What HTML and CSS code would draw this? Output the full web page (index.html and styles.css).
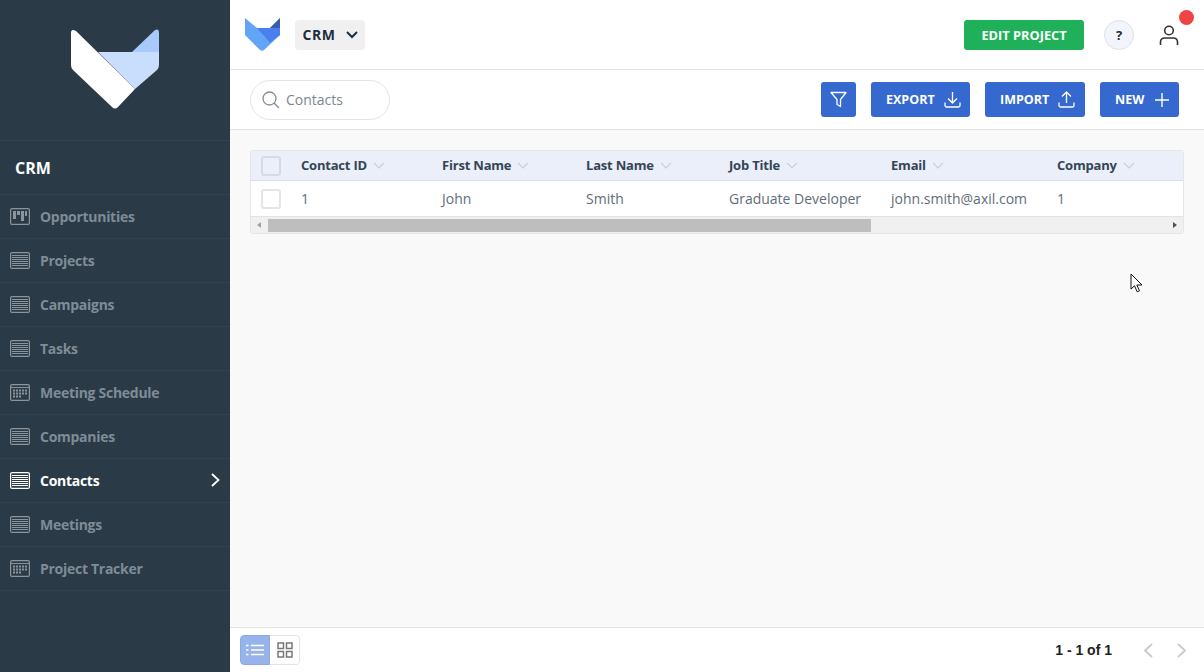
FILE: index.html
```html
<!DOCTYPE html>
<html lang="en">
<head>
<meta charset="utf-8">
<title>CRM Contacts</title>
<link rel="stylesheet" href="styles.css">
</head>
<body>
<svg class="defs" width="0" height="0" aria-hidden="true">
  <defs>
    <symbol id="i-table" viewBox="0 0 20 17">
      <rect x="0.6" y="0.6" width="18.8" height="15.8" rx="1.5" fill="none" stroke="currentColor" stroke-width="1.2"/>
      <path d="M2 3.500h16M2 5.500h16M2 7.500h16M2 9.500h16M2 11.500h16M2 13.500h16" stroke="currentColor" stroke-width="1" fill="none"/>
    </symbol>
    <symbol id="i-kanban" viewBox="0 0 20 17">
      <rect x="0.6" y="0.600" width="18.8" height="15.8" rx="1.5" fill="none" stroke="currentColor" stroke-width="1.2"/>
      <path d="M3 3h3v8H3zM7 3h3v4H7zM11 3h3v10h-3zM15 3h2v5h-2z" fill="currentColor"/>
    </symbol>
    <symbol id="i-cal" viewBox="0 0 20 17">
      <rect x="0.6" y="0.6" width="18.8" height="15.8" rx="1.5" fill="none" stroke="currentColor" stroke-width="1.2"/>
      <path d="M1 3.500h18" stroke="currentColor" stroke-width="1"/>
      <path d="M3 6.500h14M3 9.500h14M3 12.500h9" stroke="currentColor" stroke-width="2" stroke-dasharray="2 1" fill="none"/>
    </symbol>
    <symbol id="i-sort" viewBox="0 0 12 7">
      <path d="M1 1l5 5 5-5" fill="none" stroke="currentColor" stroke-width="1.200"/>
    </symbol>
  </defs>
</svg>
<div class="app">
  <aside class="sidebar">
    <div class="side-logo">
      <svg width="88" height="81" viewBox="0 0 88 81">
        <path d="M61 23L84 1Q88 -1 88 4V23Z" fill="#a8c9fb"/>
        <path d="M27 23H88V36Q88 39 86 41L64 60Z" fill="#c9ddfd"/>
        <path d="M0 4Q0 -1 5 2L64 60 47 78Q44 81 41 78L2 41Q0 39 0 36Z" fill="#fff"/>
      </svg>
    </div>
    <div class="side-title">CRM</div>
    <nav class="side-nav">
      <a class="nav-item"><svg class="nav-icon"><use href="#i-kanban"/></svg><span>Opportunities</span></a>
      <a class="nav-item"><svg class="nav-icon"><use href="#i-table"/></svg><span>Projects</span></a>
      <a class="nav-item"><svg class="nav-icon"><use href="#i-table"/></svg><span>Campaigns</span></a>
      <a class="nav-item"><svg class="nav-icon"><use href="#i-table"/></svg><span>Tasks</span></a>
      <a class="nav-item"><svg class="nav-icon"><use href="#i-cal"/></svg><span>Meeting Schedule</span></a>
      <a class="nav-item"><svg class="nav-icon"><use href="#i-table"/></svg><span>Companies</span></a>
      <a class="nav-item active"><svg class="nav-icon"><use href="#i-table"/></svg><span>Contacts</span>
        <svg class="nav-chevron" width="9" height="14" viewBox="0 0 9 14"><path d="M1 1l6.500 6L1 13" fill="none" stroke="#fff" stroke-width="1.800"/></svg></a>
      <a class="nav-item"><svg class="nav-icon"><use href="#i-table"/></svg><span>Meetings</span></a>
      <a class="nav-item"><svg class="nav-icon"><use href="#i-cal"/></svg><span>Project Tracker</span></a>
    </nav>
  </aside>
  <main class="main">
    <header class="topbar">
      <svg class="top-logo" width="35" height="33" viewBox="0 0 35 33">
        <path d="M0 0L12 10H25L35 0V17L19 32Q17 33.500 15 32L0 17Z" fill="#62a4f5"/>
        <path d="M12 10H35V17L25 24.500Z" fill="#4a7fee"/>
        <path d="M25 10L35 0V10Z" fill="#3a5bb0"/>
      </svg>
      <button class="project-select">CRM
        <svg width="12" height="8" viewBox="0 0 12 8"><path d="M1 1l5 5 5-5" fill="none" stroke="#1f2d3d" stroke-width="2"/></svg>
      </button>
      <div class="top-right">
        <button class="btn-edit">EDIT PROJECT</button>
        <button class="btn-help">?</button>
        <div class="user">
          <svg width="20" height="22" viewBox="0 0 20 22"><circle cx="10" cy="6.500" r="4.300" fill="none" stroke="#333" stroke-width="1.600"/><path d="M1.500 21v-3Q1.500 14 6 14h8q4.500 0 4.500 4v3" fill="none" stroke="#333" stroke-width="1.600"/></svg>
          <span class="user-badge"></span>
        </div>
      </div>
    </header>
    <section class="toolbar">
      <label class="search">
        <svg width="18" height="18" viewBox="0 0 18 18"><circle cx="7.500" cy="7.500" r="6.500" fill="none" stroke="#8a8a8a" stroke-width="1.300"/><path d="M12.300 12.300L17 17" stroke="#8a8a8a" stroke-width="1.300"/></svg>
        <span>Contacts</span>
      </label>
      <div class="actions">
        <button class="btn btn-icon"><svg width="17" height="17" viewBox="0 0 17 17"><path d="M1 1.500h15L10.500 8.500V15.500L7 13.500V8.500Z" fill="none" stroke="#fff" stroke-width="1.300" stroke-linejoin="round"/></svg></button>
        <button class="btn btn-label btn-export">EXPORT<svg width="17" height="17" viewBox="0 0 17 17"><path d="M8.500 1v10.500M4 7.500l4.500 4.500L13 7.500M1 11.500v3Q1 16 2.500 16h12Q16 16 16 14.500v-3" fill="none" stroke="#fff" stroke-width="1.300"/></svg></button>
        <button class="btn btn-label btn-import">IMPORT<svg width="17" height="17" viewBox="0 0 17 17"><path d="M8.500 12V1.500M4 5.500L8.500 1 13 5.500M1 11.500v3Q1 16 2.500 16h12Q16 16 16 14.500v-3" fill="none" stroke="#fff" stroke-width="1.300"/></svg></button>
        <button class="btn btn-label btn-new">NEW<svg width="14" height="14" viewBox="0 0 14 14"><path d="M7 0v14M0 7h14" stroke="#fff" stroke-width="1.400"/></svg></button>
      </div>
    </section>
    <section class="content">
      <div class="grid-card">
        <div class="grid-row grid-head">
          <div class="cell-check"><span class="check check-head"></span></div>
          <div>Contact ID<svg class="sort"><use href="#i-sort"/></svg></div>
          <div>First Name<svg class="sort"><use href="#i-sort"/></svg></div>
          <div>Last Name<svg class="sort"><use href="#i-sort"/></svg></div>
          <div>Job Title<svg class="sort"><use href="#i-sort"/></svg></div>
          <div>Email<svg class="sort"><use href="#i-sort"/></svg></div>
          <div>Company<svg class="sort"><use href="#i-sort"/></svg></div>
        </div>
        <div class="grid-row grid-body">
          <div class="cell-check"><span class="check"></span></div>
          <div>1</div>
          <div>John</div>
          <div>Smith</div>
          <div>Graduate Developer</div>
          <div>john.smith@axil.com</div>
          <div>1</div>
        </div>
        <div class="scrollbar">
          <span class="arrow arrow-left"></span>
          <span class="thumb"></span>
          <span class="arrow arrow-right"></span>
        </div>
      </div>
    </section>
    <footer class="footer">
      <div class="view-toggle">
        <button class="view view-on"><svg width="18" height="12" viewBox="0 0 18 12"><path d="M5 1.500h13M5 6h13M5 10.500h13M0 1.500h2.500M0 6h2.500M0 10.500h2.500" stroke="#fff" stroke-width="1.400"/></svg></button>
        <button class="view"><svg width="16" height="16" viewBox="0 0 16 16"><path d="M1 1h5.500v5.500H1zM9.500 1H15v5.500H9.500zM1 9.500h5.500V15H1zM9.500 9.500H15V15H9.500z" fill="none" stroke="#777" stroke-width="1.500"/></svg></button>
      </div>
      <div class="pager">
        <span>1 - 1 of 1</span>
        <svg class="page-prev" width="10" height="15" viewBox="0 0 10 15"><path d="M9 1L2 7.500 9 14" fill="none" stroke="#c9c9c9" stroke-width="1.800"/></svg>
        <svg width="10" height="15" viewBox="0 0 10 15"><path d="M1 1l7 6.500L1 14" fill="none" stroke="#c9c9c9" stroke-width="1.800"/></svg>
      </div>
    </footer>
  </main>
</div>
<svg class="cursor" width="14" height="20" viewBox="0 0 14 20"><path d="M1 1v15l3.500-3.200 2.700 6 2.300-1-2.700-5.800H12Z" fill="#fff" stroke="#111" stroke-width="1"/></svg>
</body>
</html>
```
FILE: styles.css
```css
* { box-sizing: border-box; }
html, body { margin: 0; height: 100%; overflow: hidden; }
body { font-family: "Open Sans", "Noto Sans", sans-serif; font-size: 14px; color: #3c4a57; }
button { font-family: inherit; border: 0; cursor: pointer; padding: 0; }
.defs { position: absolute; }
.app { display: flex; height: 672px; }

.sidebar { width: 230px; flex: none; background: #2a3a47; display: flex; flex-direction: column; }
.side-logo { height: 141px; border-bottom: 1px solid #324350; display: flex; justify-content: center; padding-top: 29px; }
.side-title { height: 54px; padding-left: 15px; line-height: 54px; font-size: 16px; font-weight: 700; color: #fff; border-bottom: 1px solid #324350; }
.nav-item { height: 44px; display: flex; align-items: center; padding-left: 10px; border-bottom: 1px solid #324350; color: #7f8c97; font-weight: 700; letter-spacing: -.28px; font-size: 14px; position: relative; }
.nav-icon { width: 20px; height: 17px; margin-right: 10px; color: #8b959d; }
.nav-item.active { color: #fff; }
.nav-item.active .nav-icon { color: #fff; }
.nav-chevron { position: absolute; right: 10px; top: 14px; }

.main { flex: 1; min-width: 0; display: flex; flex-direction: column; background: #f9f9f9; }
.topbar { height: 70px; flex: none; background: #fff; border-bottom: 1px solid #e3e3e3; display: flex; align-items: center; padding-left: 15px; }
.top-logo { margin-right: 15px; }
.project-select { height: 30px; width: 70px; background: #f0f0f0; border-radius: 4px; display: flex; align-items: center; justify-content: center; gap: 10px; font-size: 14px; font-weight: 700; letter-spacing: .6px; color: #1f2d3d; }
.top-right { margin-left: auto; display: flex; align-items: center; padding-right: 25px; }
.btn-edit { width: 120px; height: 30px; background: #1fb15a; color: #fff; border-radius: 3px; font-size: 12.8px; font-weight: 700; }
.btn-help { width: 30px; height: 30px; margin-left: 20px; border-radius: 50%; background: #f3f5fc; border: 1px solid #dfe1ea; color: #1f2d3d; font-size: 13px; font-weight: 700; }
.user { margin-left: 25px; width: 20px; height: 22px; position: relative; }
.user svg { display: block; }
.user-badge { position: absolute; left: 20px; top: -14px; width: 15px; height: 15px; border-radius: 50%; background: #ef4444; }

.toolbar { height: 60px; flex: none; background: #fff; border-bottom: 1px solid #e3e3e3; display: flex; align-items: center; padding: 0 25px 0 20px; }
.search { width: 140px; height: 40px; border: 1px solid #e3e3e3; border-radius: 20px; display: flex; align-items: center; padding-left: 11px; gap: 6px; color: #7d8791; font-size: 14px; }
.actions { margin-left: auto; display: flex; gap: 15px; }
.btn { height: 35px; background: #3569cf; color: #fff; border-radius: 3px; font-size: 12.5px; font-weight: 700; display: flex; align-items: center; justify-content: center; }
.btn-label { justify-content: flex-start; padding-left: 15px; gap: 9px; }
.btn-icon { width: 35px; }
.btn-export { width: 99px; }
.btn-import { width: 100px; }
.btn-new { width: 79px; gap: 11px; }

.content { flex: 1; padding: 20px 20px 0; }
.grid-card { border: 1px solid #e6e6e6; border-radius: 3px; overflow: hidden; width: 934px; background: #fff; }
.grid-row { display: grid; grid-template-columns: 50px 141px 144px 143px 162px 166px 1fr; align-items: center; }
.grid-head { height: 30px; background: #eaeffa; border-bottom: 1px solid #d8deeb; font-size: 13px; font-weight: 700; letter-spacing: -.2px; color: #354555; }
.grid-head > div { padding-bottom: 2px; }
.grid-head > .cell-check { padding-bottom: 0; }
.grid-body { height: 35px; font-size: 14px; color: #626d78; }
.cell-check { padding-left: 10px; display: flex; }
.check { width: 20px; height: 20px; border: 2px solid #e5e5e5; border-radius: 3px; background: #fff; }
.check-head { background: #eaeffa; border-color: #d5dae6; }
.sort { width: 12px; height: 7px; margin-left: 6px; color: #c9cfdc; vertical-align: 1px; }
.scrollbar { height: 17px; background: #f0f0f0; border-top: 1px solid #e3e3e3; display: flex; align-items: center; position: relative; padding-left: 17px; }
.thumb { width: 603px; height: 13px; background: #bebebe; }
.arrow { position: absolute; top: 5px; width: 0; height: 0; border-top: 3.500px solid transparent; border-bottom: 3.500px solid transparent; }
.arrow-left { left: 6px; border-right: 4px solid #a3a3a3; }
.arrow-right { right: 6px; border-left: 4px solid #505050; }

.footer { height: 45px; flex: none; background: #fff; border-top: 1px solid #e3e3e3; display: flex; align-items: center; padding: 0 17px 0 10px; }
.view-toggle { display: flex; height: 30px; width: 60px; border-radius: 4px; overflow: hidden; }
.view { width: 30px; background: #fff; display: flex; align-items: center; justify-content: center; border: 1px solid #e3e3e3; border-left: 0; border-radius: 0 4px 4px 0; }
.view-on { background: #97b4ea; border: 1px solid #8aa8e6; border-radius: 4px 0 0 4px; }
.pager { margin-left: auto; display: flex; align-items: center; font-family: "Liberation Sans", sans-serif; font-size: 14px; font-weight: 700; color: #222; }
.page-prev { margin: 0 24px 0 31px; }

.cursor { position: absolute; left: 1130px; top: 273px; }
```
